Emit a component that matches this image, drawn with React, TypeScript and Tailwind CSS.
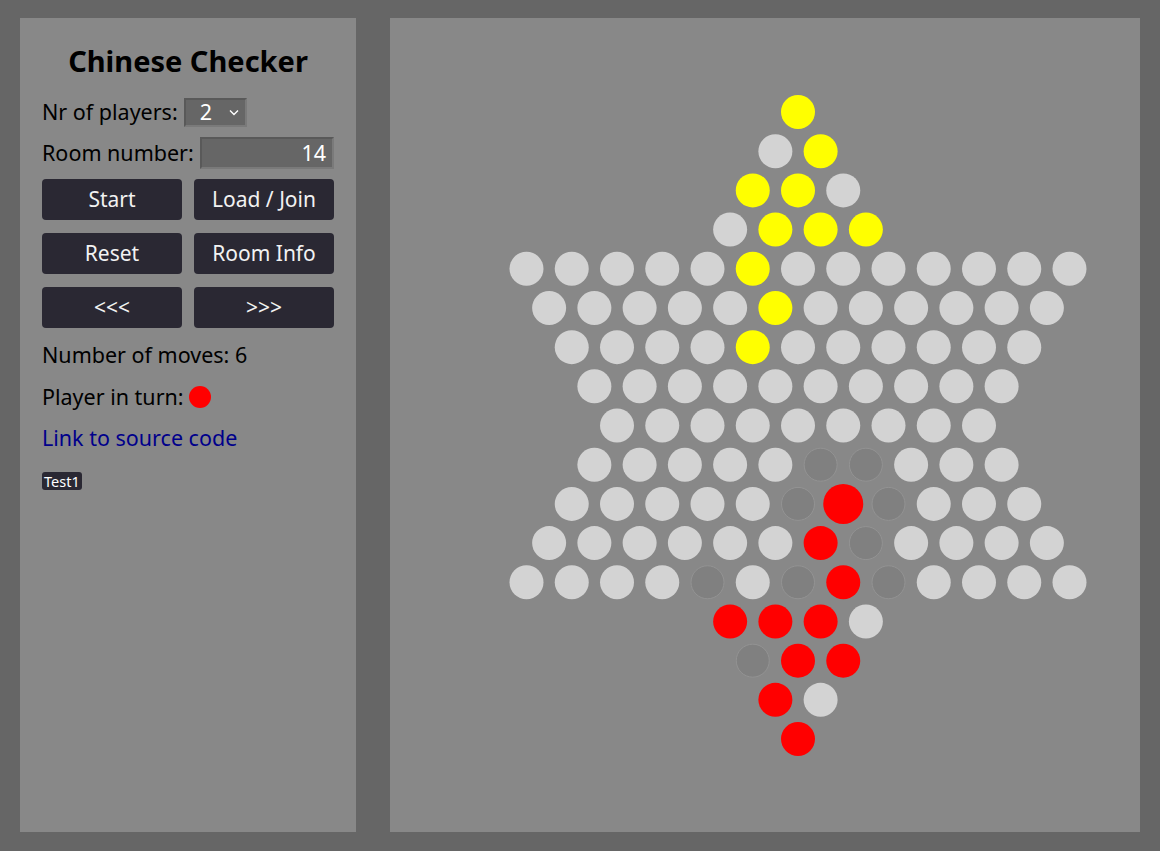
import React from "react";

const rows = [
  "Y",
  "GY",
  "YYG",
  "GYYY",
  "GGGGGYGGGGGGG",
  "GGGGGYGGGGGG",
  "GGGGYGGGGGG",
  "GGGGGGGGGG",
  "GGGGGGGGG",
  "GGGGGDDGGG",
  "GGGGGDSDGGG",
  "GGGGGGRDGGGG",
  "GGGGDGDRDGGGG",
  "RRRG",
  "DRR",
  "RG",
  "R",
];

const DX = 45.25;
const DY = 39.19;
const CX = 408;
const TOP = 94;

function Hole({ x, y, t }: { x: number; y: number; t: string }) {
  if (t === "D")
    return <circle cx={x} cy={y} r={16.5} fill="#808080" stroke="#939393" strokeWidth={1} />;
  if (t === "S") return <circle cx={x} cy={y} r={20} fill="#ff0000" />;
  const fill = t === "Y" ? "#ffff00" : t === "R" ? "#ff0000" : "#d3d3d3";
  return <circle cx={x} cy={y} r={17} fill={fill} />;
}

function Board() {
  return (
    <svg width="750" height="814" viewBox="0 0 750 814" className="block">
      {rows.map((row, i) =>
        row.split("").map((t, k) => {
          const x = CX + (k - (row.length - 1) / 2) * DX;
          const y = TOP + i * DY;
          return <Hole key={`${i}-${k}`} x={x} y={y} t={t} />;
        })
      )}
    </svg>
  );
}

function Btn({ children }: { children: React.ReactNode }) {
  return (
    <button className="h-[41px] w-[140px] rounded-[4px] bg-[#2a2833] text-[21px] text-[#f2f2f2] leading-none">
      {children}
    </button>
  );
}

export default function App() {
  return (
    <main
      className="flex h-[851px] w-[1160px] gap-[34px] bg-[#666666] pl-[20px] pt-[18px] text-black"
      style={{ fontFamily: '"Noto Sans", "Open Sans", sans-serif' }}
    >
      <section className="flex h-[814px] w-[336px] flex-col bg-[#888888] px-[22px] pt-[26px]">
        <h1 className="text-center text-[29px] font-bold leading-[34px]">Chinese Checker</h1>

        <div className="mt-[19px] flex h-[31px] items-center gap-[6px] text-[21.5px]">
          <span>Nr of players:</span>
          <div className="flex h-[29px] w-[63px] items-center justify-between border-2 border-t-[#595959] border-l-[#595959] border-b-[#7a7a7a] border-r-[#7a7a7a] bg-[#666666] pl-[14px] pr-[6px] text-white">
            <span>2</span>
            <svg width="10" height="7" viewBox="0 0 10 7">
              <polyline points="1,1.5 5,5.5 9,1.5" fill="none" stroke="#ffffff" strokeWidth="1.4" />
            </svg>
          </div>
        </div>

        <div className="mt-[9px] flex h-[32px] items-center gap-[6px] text-[21.5px]">
          <span>Room number:</span>
          <div className="flex h-[32px] flex-1 items-center justify-end border-2 border-t-[#595959] border-l-[#595959] border-b-[#7a7a7a] border-r-[#7a7a7a] bg-[#666666] pr-[6px] text-white">
            14
          </div>
        </div>

        <div className="mt-[10px] grid grid-cols-2 gap-x-[12px] gap-y-[13px]">
          <Btn>Start</Btn>
          <Btn>Load / Join</Btn>
          <Btn>Reset</Btn>
          <Btn>Room Info</Btn>
          <Btn>&lt;&lt;&lt;</Btn>
          <Btn>&gt;&gt;&gt;</Btn>
        </div>

        <p className="mt-[13px] text-[21.5px] leading-[28px]">Number of moves: 6</p>
        <p className="mt-[14px] flex items-center gap-[5px] text-[21.5px] leading-[28px]">
          Player in turn:
          <span className="inline-block h-[22px] w-[22px] rounded-full bg-[#ff0000]" />
        </p>
        <a className="mt-[13px] text-[21.5px] leading-[28px] text-[#00008b]" href="#">
          Link to source code
        </a>
        <div className="mt-[17px]">
          <span className="inline-block rounded-[3px] bg-[#2a2833] px-[2px] text-[14.5px] leading-[18px] text-white">
            Test1
          </span>
        </div>
      </section>

      <section className="h-[814px] w-[750px] bg-[#888888]">
        <Board />
      </section>
    </main>
  );
}
